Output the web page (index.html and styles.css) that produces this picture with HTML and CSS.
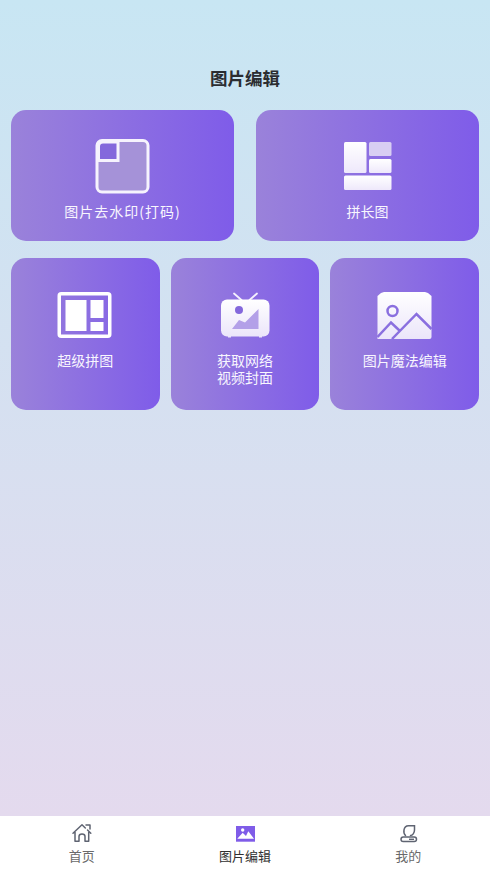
FILE: index.html
```html
<!DOCTYPE html>
<html lang="zh">
<head>
<meta charset="utf-8">
<title>图片编辑</title>
<link rel="stylesheet" href="styles.css">
</head>
<body>
<main class="page">
  <h1 class="title">图片编辑</h1>
  <section class="row row-two">
    <a class="card">
      <svg class="icon" viewBox="0 0 56 56"><rect x="2" y="2.500" width="51" height="51.500" rx="5" fill="#a592d8" stroke="#f6f3fd" stroke-width="3"/><path d="M3.500 22.500H23V4H8a4.500 4.500 0 0 0-4.500 4.500z" fill="#8468dc" stroke="#f6f3fd" stroke-width="3"/></svg>
      <span class="label wide">图片去水印(打码)</span>
    </a>
    <a class="card">
      <svg class="icon" viewBox="0 0 56 56"><defs><linearGradient id="g2" x1="0" y1="0" x2="0" y2="1"><stop offset="0" stop-color="#fff"/><stop offset="1" stop-color="#eee8fb"/></linearGradient></defs><rect x="4" y="4" width="22.500" height="31" rx="1.500" fill="url(#g2)"/><rect x="29" y="4" width="22.500" height="14" rx="1.500" fill="#d8cef3"/><rect x="29" y="21" width="22.500" height="14" rx="1.500" fill="url(#g2)"/><rect x="4" y="37.500" width="47.500" height="14.500" rx="1.500" fill="url(#g2)"/></svg>
      <span class="label">拼长图</span>
    </a>
  </section>
  <section class="row row-three">
    <a class="card tall">
      <svg class="icon" viewBox="0 0 56 56"><rect x="2.250" y="6.750" width="50.500" height="42.500" rx="2" fill="none" stroke="#fff" stroke-width="3.500"/><rect x="8.500" y="13" width="21" height="31" fill="#fff"/><rect x="33.500" y="13" width="13" height="18" fill="#fff"/><rect x="33.500" y="35" width="13" height="9" fill="#fff"/></svg>
      <span class="label">超级拼图</span>
    </a>
    <a class="card tall">
      <svg class="icon" viewBox="0 0 56 56"><defs><linearGradient id="g4" x1="0" y1="0" x2="0" y2="1"><stop offset="0" stop-color="#fff"/><stop offset="1" stop-color="#ebe5fa"/></linearGradient></defs><path d="M17 6.500 24.500 13M40 6.500 32.500 13" stroke="#f4f0fd" stroke-width="1.800" stroke-linecap="round" fill="none"/><rect x="4" y="12.500" width="48.500" height="37" rx="6" fill="url(#g4)"/><path d="M11 49h3v1.500h-3zM42 49h3v1.500h-3z" fill="#ebe5fa"/><circle cx="22" cy="23" r="4" fill="#8468dc"/><path d="M15 42 22 33 28 35.500 41.500 22V42z" fill="#b3a0e8"/></svg>
      <span class="label">获取网络<br>视频封面</span>
    </a>
    <a class="card tall">
      <svg class="icon" viewBox="0 0 56 56"><defs><linearGradient id="g5" x1="0" y1="0" x2="0" y2="1"><stop offset="0" stop-color="#fff"/><stop offset="1" stop-color="#ebe5fa"/></linearGradient></defs><path d="M.5 9 4 6 7 5h41l3 1 3.500 3V50a2 2 0 0 1-2 2H.5z" fill="url(#g5)"/><circle cx="15.500" cy="24" r="5" fill="none" stroke="#8a6fdf" stroke-width="2.500"/><path d="M.5 50 14 35.500 23 44M15 52 39.500 27 54.500 42" fill="none" stroke="#8a6fdf" stroke-width="2.500"/></svg>
      <span class="label">图片魔法编辑</span>
    </a>
  </section>
</main>
<nav class="tabbar">
  <a class="tab">
    <svg class="tab-icon" viewBox="0 0 24 24"><path d="M3 11.300 12 2.800 15.300 6M17.500 8 20.800 11.300M16 3H20V7M5 10V19.300H9V14.500a3 2.500 0 0 1 6 0V19.300H18.700V10" fill="none" stroke="#5f6472" stroke-width="1.500" stroke-linecap="round" stroke-linejoin="round"/></svg>
    <span>首页</span>
  </a>
  <a class="tab active">
    <svg class="tab-icon" viewBox="0 0 24 24"><rect x="3" y="4" width="19" height="15.700" fill="#7f5ce8"/><circle cx="9.700" cy="8" r="1.700" fill="#fff"/><path d="M4.300 16.700 9.700 10.700 13 14 15.300 9.300 21 16.700z" fill="#fff"/></svg>
    <span>图片编辑</span>
  </a>
  <a class="tab">
    <svg class="tab-icon" viewBox="0 0 24 24"><path d="M9.500 13.500C7 11 7 4 12.500 3.800H18.500V8C18.500 11 16.500 13.500 14.500 13.500" fill="none" stroke="#5f6472" stroke-width="1.500" stroke-linecap="round"/><rect x="5" y="15" width="15.500" height="4.500" rx="2.250" fill="none" stroke="#5f6472" stroke-width="1.500"/><path d="M13 17.300H18" stroke="#5f6472" stroke-width="1.400"/></svg>
    <span>我的</span>
  </a>
</nav>
</body>
</html>
```

FILE: styles.css
```css
* { box-sizing: border-box; }
html, body { margin: 0; height: 100%; }
body {
  display: flex;
  flex-direction: column;
  font-family: "Noto Sans CJK SC", "Noto Sans", sans-serif;
  overflow: hidden;
}
.page {
  flex: 1;
  padding: 66px 11px 0;
  background: linear-gradient(180deg, #c8e6f3 0%, #e4daee 100%);
}
.title {
  margin: 0 0 21px;
  font-size: 17.500px;
  line-height: 23px;
  font-weight: 700;
  text-align: center;
  color: #2b2d31;
}
.row { display: grid; column-gap: 11px; }
.row-two { grid-template-columns: 223px 223px; column-gap: 22px; margin-bottom: 17px; }
.row-three { grid-template-columns: repeat(3, 1fr); }
.card {
  display: flex;
  flex-direction: column;
  align-items: center;
  height: 131px;
  padding-top: 28px;
  border-radius: 15px;
  background: linear-gradient(90deg, #9a82da 0%, #7f5ce9 100%);
  color: #fff;
}
.card.tall { height: 152px; padding-top: 29px; }
.icon { display: block; width: 56px; height: 56px; flex: none; filter: blur(.3px); }
.label {
  margin-top: 9px;
  font-size: 14px;
  line-height: 17px;
  text-align: center;
  color: #f8f6fe;
}
.label.wide { letter-spacing: 1px; }
.tabbar {
  display: grid;
  grid-template-columns: repeat(3, 1fr);
  height: 55px;
  padding-top: 6px;
  background: #fff;
}
.tab {
  display: flex;
  flex-direction: column;
  align-items: center;
  font-size: 13px;
  line-height: 19px;
  color: #6a6a6a;
}
.tab.active { color: #303030; }
.tab-icon { display: block; width: 24px; height: 24px; flex: none; }
```
